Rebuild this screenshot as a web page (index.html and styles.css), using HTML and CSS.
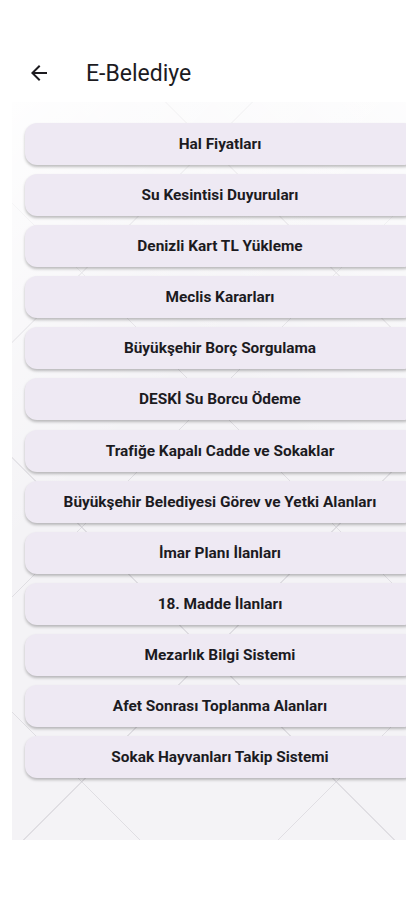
FILE: index.html
```html
<!DOCTYPE html>
<html lang="tr">
<head>
  <meta charset="UTF-8">
  <meta name="viewport" content="width=device-width, initial-scale=1.0">
  <title>E-Belediye</title>
  <link rel="stylesheet" href="styles.css">
</head>
<body>

  <div class="app-bar">
    <svg class="back-icon" width="24" height="24" viewBox="0 0 24 24">
      <path d="M20 11H7.83l5.59-5.59L12 4l-8 8 8 8 1.41-1.41L7.83 13H20v-2z" fill="#1c1b1f"/>
    </svg>
    <h1 class="title">E-Belediye</h1>
  </div>

  <div class="menu-panel">
    <div class="menu-list">
      <button class="menu-button">Hal Fiyatları</button>
      <button class="menu-button">Su Kesintisi Duyuruları</button>
      <button class="menu-button">Denizli Kart TL Yükleme</button>
      <button class="menu-button">Meclis Kararları</button>
      <button class="menu-button">Büyükşehir Borç Sorgulama</button>
      <button class="menu-button">DESKİ Su Borcu Ödeme</button>
      <button class="menu-button">Trafiğe Kapalı Cadde ve Sokaklar</button>
      <button class="menu-button">Büyükşehir Belediyesi Görev ve Yetki Alanları</button>
      <button class="menu-button">İmar Planı İlanları</button>
      <button class="menu-button">18. Madde İlanları</button>
      <button class="menu-button">Mezarlık Bilgi Sistemi</button>
      <button class="menu-button">Afet Sonrası Toplanma Alanları</button>
      <button class="menu-button">Sokak Hayvanları Takip Sistemi</button>
    </div>
  </div>

</body>
</html>
```

FILE: styles.css
```css
body {
  margin: 0;
  background-color: #ffffff;
  font-family: Roboto, "Noto Sans", sans-serif;
  color: #1c1b1f;
}

.app-bar {
  display: flex;
  align-items: center;
  height: 56px;
  padding: 45px 0 0 27px;
}

.back-icon {
  flex: none;
}

.title {
  margin: 0 0 0 35px;
  font-size: 23px;
  font-weight: 400;
}

.menu-panel {
  margin: 1px 9px 0 12px;
  height: 738px;
  overflow: hidden;
  background-color: #f4f3f6;
  background-image:
    linear-gradient(135deg, rgba(255,255,255,0.9) 0%, rgba(255,255,255,0) 40%),
    linear-gradient(45deg, rgba(255,255,255,0) 60%, rgba(255,255,255,0.8) 100%),
    repeating-linear-gradient(45deg, transparent 0 90px, rgba(210,208,214,0.6) 90px 91px, transparent 91px 180px),
    repeating-linear-gradient(-45deg, transparent 0 90px, rgba(210,208,214,0.6) 90px 91px, transparent 91px 180px);
}

.menu-list {
  display: flex;
  flex-direction: column;
  gap: 9.1px;
  padding: 21px 0 0 13px;
}

.menu-button {
  width: 390px;
  height: 42px;
  border: none;
  border-radius: 12px;
  background-color: #eee9f3;
  box-shadow: 0 2px 3px rgba(0, 0, 0, 0.25);
  font-family: Roboto, "Noto Sans", sans-serif;
  font-size: 15.4px;
  font-weight: 700;
  color: #1c1b1f;
  text-align: center;
  padding: 0;
  cursor: pointer;
}
```
